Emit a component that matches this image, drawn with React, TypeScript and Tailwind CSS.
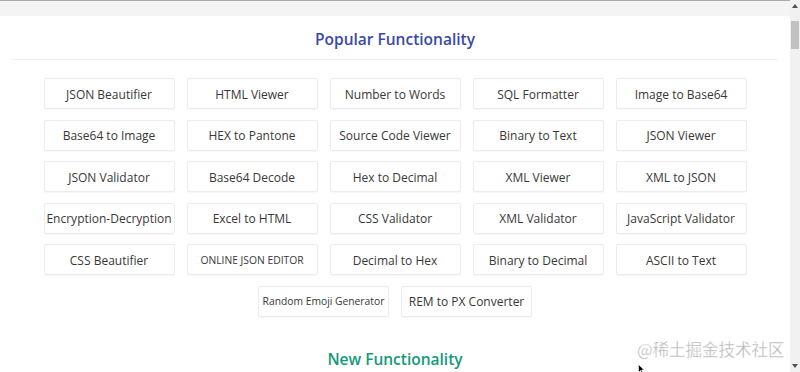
import React from "react";

const items: { t: string; small?: boolean }[] = [
  { t: "JSON Beautifier" },
  { t: "HTML Viewer" },
  { t: "Number to Words" },
  { t: "SQL Formatter" },
  { t: "Image to Base64" },
  { t: "Base64 to Image" },
  { t: "HEX to Pantone" },
  { t: "Source Code Viewer" },
  { t: "Binary to Text" },
  { t: "JSON Viewer" },
  { t: "JSON Validator" },
  { t: "Base64 Decode" },
  { t: "Hex to Decimal" },
  { t: "XML Viewer" },
  { t: "XML to JSON" },
  { t: "Encryption-Decryption" },
  { t: "Excel to HTML" },
  { t: "CSS Validator" },
  { t: "XML Validator" },
  { t: "JavaScript Validator" },
  { t: "CSS Beautifier" },
  { t: "ONLINE JSON EDITOR", small: true },
  { t: "Decimal to Hex" },
  { t: "Binary to Decimal" },
  { t: "ASCII to Text" },
  { t: "Random Emoji Generator", small: true },
  { t: "REM to PX Converter" },
];

export default function App() {
  return (
    <div
      className="relative flex h-[372px] w-[800px] overflow-hidden bg-white"
      style={{ fontFamily: '"Open Sans", "Noto Sans", sans-serif' }}
    >
      <div className="flex min-w-0 flex-1 flex-col border-t border-[#a9a9a9]">
        <div className="h-[15px] bg-[#f4f4f4]" />
        <div className="mr-[12px] ml-[12px] flex flex-col">
          <h2 className="pt-[12px] text-center text-[15.5px] leading-[23px] font-semibold text-[#3949ab]">
            Popular Functionality
          </h2>
          <div className="mt-[8px] h-px bg-[#f1f1f1]" />
          <div className="mx-auto mt-[18px] flex w-[716px] flex-wrap justify-center gap-x-[12px] gap-y-[10.5px]">
            {items.map((it) => (
              <div
                key={it.t}
                className="flex h-[31px] w-[131px] items-center justify-center rounded-[2px] border border-[#ececec] bg-white pt-[2px] whitespace-nowrap text-[#383838] shadow-[0_1px_1px_rgba(0,0,0,0.03)]"
              >
                <span className={it.small ? "text-[10.3px]" : "text-[12px]"}>{it.t}</span>
              </div>
            ))}
          </div>
          <h2 className="mt-[31px] text-center text-[15.5px] leading-[23px] font-semibold text-[#139a7a]">
            New Functionality
          </h2>
        </div>
      </div>
      <div className="flex w-[10px] flex-col items-center bg-[#f1f1f1]">
        <div className="mt-[4px] h-0 w-0 border-x-[3px] border-b-[4px] border-x-transparent border-b-[#505050]" />
        <div className="mt-[13px] h-[28px] w-[8px] bg-[#c1c1c1]" />
        <div className="flex-1" />
        <div className="mb-[4px] h-0 w-0 border-x-[3px] border-t-[4px] border-x-transparent border-t-[#505050]" />
      </div>
      <div
        className="absolute top-[339px] left-[637px] text-[16.5px] leading-[20px] text-[#b4b4b4]"
        style={{ fontFamily: '"Noto Sans CJK SC", sans-serif', WebkitTextStroke: "0.3px #fff" }}
      >
        @稀土掘金技术社区
      </div>
      <svg className="absolute top-[364px] left-[638px]" width="7" height="10" viewBox="0 0 7 10">
        <path d="M0.5 0.5 L0.5 8.5 L2.5 6.5 L4 9.5 L5 9 L3.6 6 L6.2 6 Z" fill="#000" stroke="#fff" strokeWidth="0.6" />
      </svg>
    </div>
  );
}
